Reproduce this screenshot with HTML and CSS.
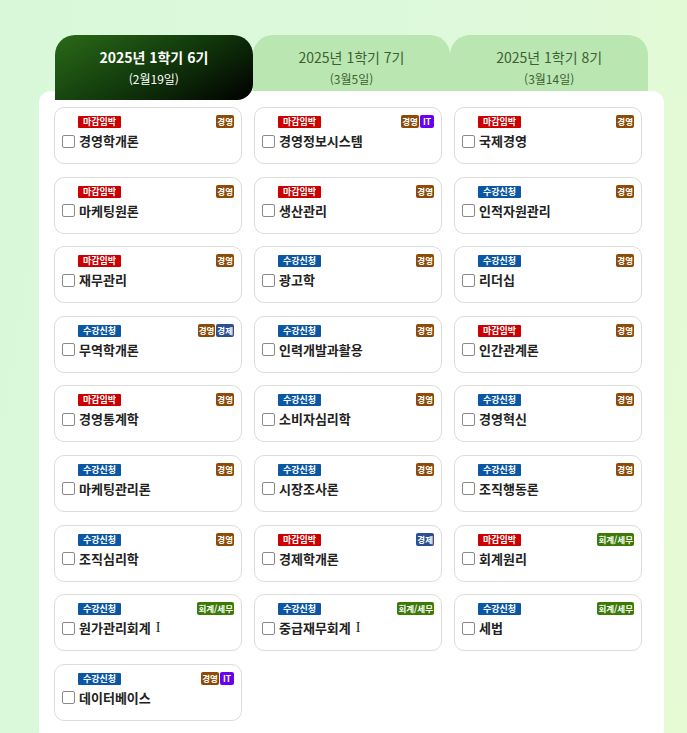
FILE: index.html
```html
<!DOCTYPE html>
<html lang="ko">
<head>
<meta charset="utf-8">
<link rel="stylesheet" href="styles.css">
</head>
<body>
<div class="page">
  <div class="tabs">
    <div class="tab active"><div class="t1">2025년 1학기 6기</div><div class="t2">(2월19일)</div></div>
    <div class="tab"><div class="t1">2025년 1학기 7기</div><div class="t2">(3월5일)</div></div>
    <div class="tab"><div class="t1">2025년 1학기 8기</div><div class="t2">(3월14일)</div></div>
  </div>
  <div class="panel">
    <div class="grid">
      <div class="card"><div class="top"><span class="st red">마감임박</span><span class="tags"><span class="tag br">경영</span></span></div><label class="title"><span class="cb"></span>경영학개론</label></div>
      <div class="card"><div class="top"><span class="st red">마감임박</span><span class="tags"><span class="tag br">경영</span><span class="tag it">IT</span></span></div><label class="title"><span class="cb"></span>경영정보시스템</label></div>
      <div class="card"><div class="top"><span class="st red">마감임박</span><span class="tags"><span class="tag br">경영</span></span></div><label class="title"><span class="cb"></span>국제경영</label></div>

      <div class="card"><div class="top"><span class="st red">마감임박</span><span class="tags"><span class="tag br">경영</span></span></div><label class="title"><span class="cb"></span>마케팅원론</label></div>
      <div class="card"><div class="top"><span class="st red">마감임박</span><span class="tags"><span class="tag br">경영</span></span></div><label class="title"><span class="cb"></span>생산관리</label></div>
      <div class="card"><div class="top"><span class="st blue">수강신청</span><span class="tags"><span class="tag br">경영</span></span></div><label class="title"><span class="cb"></span>인적자원관리</label></div>

      <div class="card"><div class="top"><span class="st red">마감임박</span><span class="tags"><span class="tag br">경영</span></span></div><label class="title"><span class="cb"></span>재무관리</label></div>
      <div class="card"><div class="top"><span class="st blue">수강신청</span><span class="tags"><span class="tag br">경영</span></span></div><label class="title"><span class="cb"></span>광고학</label></div>
      <div class="card"><div class="top"><span class="st blue">수강신청</span><span class="tags"><span class="tag br">경영</span></span></div><label class="title"><span class="cb"></span>리더십</label></div>

      <div class="card"><div class="top"><span class="st blue">수강신청</span><span class="tags"><span class="tag br">경영</span><span class="tag ec">경제</span></span></div><label class="title"><span class="cb"></span>무역학개론</label></div>
      <div class="card"><div class="top"><span class="st blue">수강신청</span><span class="tags"><span class="tag br">경영</span></span></div><label class="title"><span class="cb"></span>인력개발과활용</label></div>
      <div class="card"><div class="top"><span class="st red">마감임박</span><span class="tags"><span class="tag br">경영</span></span></div><label class="title"><span class="cb"></span>인간관계론</label></div>

      <div class="card"><div class="top"><span class="st red">마감임박</span><span class="tags"><span class="tag br">경영</span></span></div><label class="title"><span class="cb"></span>경영통계학</label></div>
      <div class="card"><div class="top"><span class="st blue">수강신청</span><span class="tags"><span class="tag br">경영</span></span></div><label class="title"><span class="cb"></span>소비자심리학</label></div>
      <div class="card"><div class="top"><span class="st blue">수강신청</span><span class="tags"><span class="tag br">경영</span></span></div><label class="title"><span class="cb"></span>경영혁신</label></div>

      <div class="card"><div class="top"><span class="st blue">수강신청</span><span class="tags"><span class="tag br">경영</span></span></div><label class="title"><span class="cb"></span>마케팅관리론</label></div>
      <div class="card"><div class="top"><span class="st blue">수강신청</span><span class="tags"><span class="tag br">경영</span></span></div><label class="title"><span class="cb"></span>시장조사론</label></div>
      <div class="card"><div class="top"><span class="st blue">수강신청</span><span class="tags"><span class="tag br">경영</span></span></div><label class="title"><span class="cb"></span>조직행동론</label></div>

      <div class="card"><div class="top"><span class="st blue">수강신청</span><span class="tags"><span class="tag br">경영</span></span></div><label class="title"><span class="cb"></span>조직심리학</label></div>
      <div class="card"><div class="top"><span class="st red">마감임박</span><span class="tags"><span class="tag ec">경제</span></span></div><label class="title"><span class="cb"></span>경제학개론</label></div>
      <div class="card"><div class="top"><span class="st red">마감임박</span><span class="tags"><span class="tag ac">회계/세무</span></span></div><label class="title"><span class="cb"></span>회계원리</label></div>

      <div class="card"><div class="top"><span class="st blue">수강신청</span><span class="tags"><span class="tag ac">회계/세무</span></span></div><label class="title"><span class="cb"></span><span>원가관리회계</span><span class="rn">I</span></label></div>
      <div class="card"><div class="top"><span class="st blue">수강신청</span><span class="tags"><span class="tag ac">회계/세무</span></span></div><label class="title"><span class="cb"></span><span>중급재무회계</span><span class="rn">I</span></label></div>
      <div class="card"><div class="top"><span class="st blue">수강신청</span><span class="tags"><span class="tag ac">회계/세무</span></span></div><label class="title"><span class="cb"></span>세법</label></div>

      <div class="card"><div class="top"><span class="st blue">수강신청</span><span class="tags"><span class="tag br">경영</span><span class="tag it">IT</span></span></div><label class="title"><span class="cb"></span>데이터베이스</label></div>
    </div>
  </div>
</div>
</body>
</html>
```

FILE: styles.css
```css
* { box-sizing: border-box; }
html, body { margin: 0; padding: 0; }
body {
  font-family: "Noto Sans CJK KR", "Noto Sans", sans-serif;
  background: linear-gradient(100deg, #d9f8d9 0%, #ddf9dc 50%, #e6fad4 100%);
  min-height: 733px;
}
.page { padding-top: 35px; }
.tabs {
  display: flex;
  margin-left: 55px;
  width: 593px;
  height: 56px;
  align-items: flex-start;
}
.tab {
  flex: 1;
  height: 56px;
  background: #b9e6b1;
  color: #3f5f33;
  border-radius: 20px 20px 0 0;
  text-align: center;
  padding-top: 10px;
}
.tab.active {
  height: 65px;
  background: linear-gradient(150deg, #2a6a18 0%, #123a0c 50%, #000 100%);
  color: #fff;
  border-radius: 20px 20px 16px 0;
  position: relative;
  z-index: 1;
}
.t1 { font-size: 14px; line-height: 24px; }
.tab.active .t1 { font-weight: 700; }
.t2 { font-size: 12px; line-height: 19px; }
.panel {
  margin-left: 39px;
  width: 625px;
  background: #fff;
  border-radius: 12px;
  padding: 16px 0 20px 15px;
}
.grid {
  display: grid;
  grid-template-columns: 188px 188px 188px;
  column-gap: 12px;
  row-gap: 12.6px;
}
.card {
  height: 57px;
  border: 1px solid #dcdcdc;
  border-radius: 10px;
  padding: 7px 7px 0 7px;
}
.top {
  display: flex;
  justify-content: space-between;
  align-items: flex-start;
  height: 14px;
}
.st {
  margin-left: 16px;
  margin-top: 1px;
  display: inline-block;
  font-size: 9px;
  font-weight: 700;
  color: #fff;
  line-height: 12px;
  height: 12px;
  padding: 0 5px;
  border-radius: 1px;
}
.st.red { background: #cc0000; }
.st.blue { background: #0b57a4; }
.tags { display: flex; gap: 1px; }
.tag {
  display: inline-block;
  font-size: 8.5px;
  font-weight: 700;
  color: #fff;
  line-height: 13px;
  height: 13px;
  padding: 0 1px;
  border-radius: 2px;
}
.tag.br { background: #8d4b07; }
.tag.ec { background: #2d4f91; }
.tag.it { background: #6a00f0; padding: 0 3px; }
.tag.ac { background: #3b7a05; }
.title {
  display: flex;
  align-items: center;
  margin-top: 3px;
  font-size: 13px;
  font-weight: 700;
  color: #222;
  line-height: 18px;
}
.rn {
  font-family: "Liberation Serif", serif;
  font-weight: 400;
  font-size: 14px;
  margin-left: 5px;
}
.cb {
  display: inline-block;
  width: 13px;
  height: 13px;
  border: 1px solid #8a8a8a;
  border-radius: 2px;
  margin-right: 4px;
  background: #fff;
}
```
